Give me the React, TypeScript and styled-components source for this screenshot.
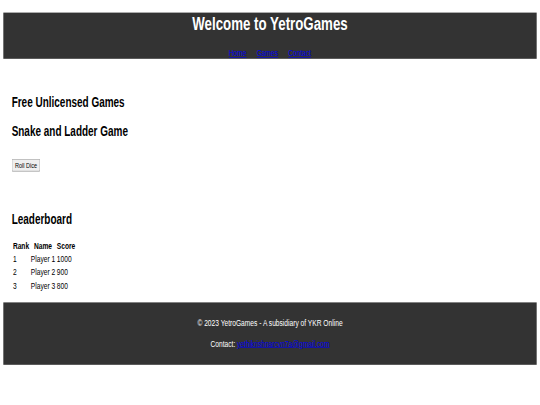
import React from "react";
import styled, { createGlobalStyle } from "styled-components";

// The screenshot is a 1300x675 page squeezed into 540x405, so the page is
// laid out at that size and scaled down as a whole.
const FRAME_W = 540;
const FRAME_H = 405;
const PAGE_W = 1300;
const PAGE_H = 675;

const GlobalStyle = createGlobalStyle`
  html, body {
    margin: 0;
    padding: 0;
    background: #fff;
    overflow: hidden;
  }
  body {
    font-family: "Liberation Sans", Arial, sans-serif;
  }
`;

const leaders = [
  { rank: 1, name: "Player 1", score: 1000 },
  { rank: 2, name: "Player 2", score: 900 },
  { rank: 3, name: "Player 3", score: 800 },
];

export default function App() {
  return (
    <>
      <GlobalStyle />
      <Frame>
        <Viewport>
          <Header>
            <Title>Welcome to YetroGames</Title>
            <Nav>
              <NavLink href="#">Home</NavLink>{" "}
              <NavLink href="#">Games</NavLink>{" "}
              <NavLink href="#">Contact</NavLink>
            </Nav>
          </Header>
          <Main>
            <GamesSection>
              <SectionTitle>Free Unlicensed Games</SectionTitle>
              <SectionTitle>Snake and Ladder Game</SectionTitle>
              <GameControls>
                <RollButton type="button">Roll Dice</RollButton>
              </GameControls>
            </GamesSection>
            <LeaderboardSection>
              <SectionTitle>Leaderboard</SectionTitle>
              <Table>
                <thead>
                  <tr>
                    <Th>Rank</Th>
                    <Th>Name</Th>
                    <Th>Score</Th>
                  </tr>
                </thead>
                <tbody>
                  {leaders.map((row) => (
                    <tr key={row.rank}>
                      <Td>{row.rank}</Td>
                      <Td>{row.name}</Td>
                      <Td>{row.score}</Td>
                    </tr>
                  ))}
                </tbody>
              </Table>
            </LeaderboardSection>
          </Main>
          <Footer>
            <FooterText>© 2023 YetroGames - A subsidiary of YKR Online</FooterText>
            <FooterText>
              Contact: <MailLink href="#">yethikrishnarcvn7a@gmail.com</MailLink>
            </FooterText>
          </Footer>
        </Viewport>
      </Frame>
    </>
  );
}

const Frame = styled.div`
  width: ${FRAME_W}px;
  height: ${FRAME_H}px;
  overflow: hidden;
`;

const Viewport = styled.div`
  width: ${PAGE_W}px;
  height: ${PAGE_H}px;
  padding: 0 8px;
  box-sizing: border-box;
  overflow: hidden;
  transform: scale(${FRAME_W / PAGE_W}, ${FRAME_H / PAGE_H});
  transform-origin: 0 0;
  font-size: 16px;
  line-height: normal;
`;

const Header = styled.header`
  margin-top: 21.44px;
  background-color: #333;
  color: #fff;
  text-align: center;
`;

const Title = styled.h1`
  margin: 0 0 21.44px;
  font-size: 32px;
  font-weight: bold;
`;

const Nav = styled.nav`
  font-size: 16px;
`;

const NavLink = styled.a`
  margin: 0 10px;
  color: #0000ee;
  text-decoration: underline;
`;

const Main = styled.main`
  padding: 20px 20px 16px;
`;

const GamesSection = styled.section`
  padding: 19px 0 20px;
`;

const LeaderboardSection = styled.section`
  padding: 25px 0 0;
`;

const SectionTitle = styled.h2`
  margin: 19.92px 0;
  font-size: 24px;
  font-weight: bold;
  color: #000;
`;

const GameControls = styled.div`
  display: flex;
  padding-top: 12px;
`;

const RollButton = styled.button`
  font-family: "Liberation Sans", Arial, sans-serif;
  font-size: 13.333px;
`;

const Table = styled.table`
  margin: 0;
  border-spacing: 2px;
  font-size: 16px;
`;

const Th = styled.th`
  padding: 1px;
  font-weight: bold;
  text-align: center;
`;

const Td = styled.td`
  padding: 1px;
  text-align: left;
`;

const Footer = styled.footer`
  padding: 10px;
  background-color: #333;
  color: #fff;
  text-align: center;
`;

const FooterText = styled.p`
  margin: 16px 0;
`;

const MailLink = styled.a`
  color: #0000ee;
  text-decoration: underline;
`;
